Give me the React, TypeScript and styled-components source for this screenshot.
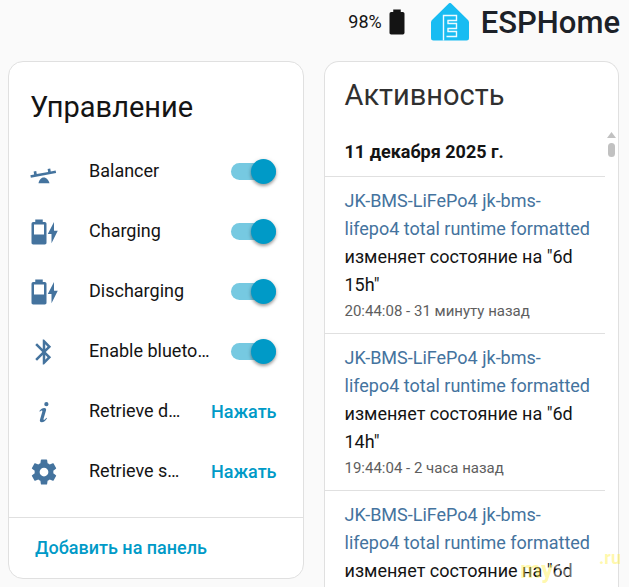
import React from 'react';
import styled, { createGlobalStyle } from 'styled-components';

const GlobalStyle = createGlobalStyle`
  * { box-sizing: border-box; }
  html, body, #root { height: 100%; }
  body {
    margin: 0;
    background: #fafafa;
    color: #141414;
    font-family: Roboto, "Noto Sans", sans-serif;
    font-size: 18px;
    line-height: 28px;
    overflow: hidden;
  }
`;

const Page = styled.div`
  display: flex;
  flex-direction: column;
  height: 100%;
  position: relative;
`;

const TopBar = styled.header`
  display: flex;
  flex: none;
  justify-content: flex-end;
  align-items: center;
  height: 44px;
  padding-right: 9px;
`;

const Charge = styled.span`
  display: flex;
  align-items: center;
  margin-right: 19px;
`;

const Brand = styled.a`
  display: flex;
  align-items: center;
  gap: 12px;
  color: #1c2128;
  text-decoration: none;
  font-size: 31px;
  font-weight: 500;
  line-height: 44px;
`;

const BrandName = styled.span`
  padding-top: 2px;
`;

const Columns = styled.main`
  display: grid;
  flex: 1;
  grid-template-columns: 1fr 1fr;
  align-items: start;
  gap: 20px;
  min-height: 0;
  padding: 17px 10px 0 8px;
`;

const Card = styled.section`
  min-width: 0;
  border: 1px solid #e0e0e0;
  border-radius: 15px;
  background: #fff;
`;

const ActivityCard = styled(Card)`
  display: flex;
  flex-direction: column;
  height: 100%;
  border-bottom: 0;
  border-radius: 15px 15px 0 0;
`;

const CardTitle = styled.h1`
  margin: 0;
  padding: 25px 21px 14px;
  font-size: 29px;
  font-weight: 400;
  line-height: 40px;
`;

const ActivityTitle = styled(CardTitle)`
  padding: 13px 20px 0;
  color: #303030;
`;

const Rows = styled.ul`
  margin: 0;
  padding: 0 26px 16px 20px;
  list-style: none;
`;

const Row = styled.li`
  display: flex;
  align-items: center;
  height: 60px;
`;

const RowIcon = styled.svg`
  flex: none;
  width: 30px;
  height: 30px;
  margin: 2px 30px 0 0;
  fill: #44739e;
`;

const RowName = styled.label`
  flex: 1;
  min-width: 0;
  overflow: hidden;
  text-overflow: ellipsis;
  white-space: nowrap;
`;

const Toggle = styled.input`
  appearance: none;
  display: flex;
  flex: none;
  align-items: center;
  justify-content: flex-end;
  width: 45px;
  height: 17px;
  margin: 0 1px 0 20px;
  border-radius: 9px;
  background: #76c9e1;
  cursor: pointer;

  &::before {
    content: "";
    width: 25px;
    height: 25px;
    border-radius: 50%;
    background: #009ac7;
    box-shadow: 0 2px 3px rgba(0, 0, 0, 0.3), 0 1px 5px rgba(0, 0, 0, 0.14);
  }
  &:not(:checked) { justify-content: flex-start; background: #bdbdbd; }
  &:not(:checked)::before { background: #fafafa; }
`;

const TextButton = styled.button`
  flex: none;
  margin: 0;
  padding: 0;
  border: 0;
  background: none;
  color: #009ac7;
  font: inherit;
  font-weight: 500;
  cursor: pointer;
`;

const PressButton = styled(TextButton)`
  margin: 2px 0 0 30px;
`;

const CardFooter = styled.footer`
  padding: 16px 26px;
  border-top: 1px solid #e0e0e0;
`;

const LogScroller = styled.div`
  display: flex;
  flex: 1;
  gap: 2px;
  min-height: 0;
  padding-right: 2px;
  overflow: hidden;
`;

const Log = styled.div`
  flex: 1;
  min-width: 0;
`;

const ScrollMark = styled.svg`
  flex: none;
  width: 9px;
  height: 28px;
  margin-top: 16px;
  fill: #c1c1c1;
`;

const LogDate = styled.h2`
  margin: 0;
  padding: 26px 20px 13px;
  border-bottom: 1px solid #e0e0e0;
  font-size: 18px;
  font-weight: 700;
  line-height: 22px;
`;

const Entry = styled.article`
  padding: 10px 12px 9px 20px;
  border-bottom: 1px solid #e0e0e0;
`;

const EntityLink = styled.a`
  color: #44739e;
  text-decoration: none;
`;

const Message = styled.p`
  margin: 0;
`;

const Time = styled.time`
  display: block;
  color: #5e5e5e;
  font-size: 15px;
  line-height: 25px;
`;

const Watermark = styled.div`
  position: absolute;
  right: 8px;
  bottom: 5px;
  display: flex;
  align-items: flex-end;
  color: rgba(255, 240, 70, 0.45);
  font-size: 24px;
  font-weight: 700;
  line-height: 24px;
  pointer-events: none;
`;

const WatermarkCenter = styled.span`
  color: rgba(255, 255, 255, 0.4);
`;

const WatermarkDomain = styled.span`
  padding-bottom: 12px;
  font-size: 18px;
`;

const ICONS = {
  seesaw:
    'M21.700 12.800 1.500 16.600l-.4-2 3-.55-.4-2.400 2.100-.4.400 2.400 9.100-1.700-.4-2.400 2.100-.4.400 2.400 3.900-.7.400 2ZM7.600 21c.5-2.500 2-4.600 4.200-4.600 2.200 0 3.900 2.100 4.600 4.600Z',
  battery:
    'M12 14H4V6h8m.67-2H11V2H5v2H3.330A1.340 1.340 0 0 0 2 5.330v15.330C2 21.400 2.600 22 3.330 22h9.340c.74 0 1.330-.6 1.330-1.330V5.330C14 4.600 13.400 4 12.670 4M23 11h-3V4l-5 9.500h3V21z',
  bluetooth:
    'M14.88 16.29 13 18.17v-3.76m0-8.58 1.88 1.88L13 9.58m4.71-1.87L12 2h-1v7.58L6.41 5 5 6.41 10.59 12 5 17.58 6.41 19 11 14.41V22h1l5.71-5.71L13.41 12z',
  info:
    'M13.900 4a1.700 1.700 0 1 1 0 3.400 1.700 1.700 0 0 1 0-3.400M8.300 11.200c1.200-1.600 2.500-2.500 3.900-2.500 1.300 0 1.800.8 1.400 2.100l-1.900 6.400c-.2.700-.1 1 .3 1 .5 0 1.200-.7 1.900-1.700l.5.400c-1.200 2-2.600 3.200-4.200 3.200-1.300 0-1.800-.8-1.400-2.100l1.700-5.900c.3-.9.200-1.300-.3-1.300-.4 0-.9.400-1.500 1Z',
  cog:
    'M12 15.5A3.5 3.5 0 0 1 8.5 12 3.5 3.5 0 0 1 12 8.5a3.5 3.5 0 0 1 3.5 3.5 3.5 3.5 0 0 1-3.5 3.5m7.43-2.53c.04-.32.07-.64.07-.97s-.03-.66-.07-1l2.11-1.63c.19-.15.24-.42.12-.64l-2-3.46c-.12-.22-.39-.31-.61-.22l-2.49 1c-.52-.39-1.06-.73-1.69-.98l-.37-2.65A.506.506 0 0 0 14 2h-4c-.25 0-.46.18-.5.42l-.37 2.65c-.63.25-1.17.59-1.69.98l-2.49-1c-.22-.09-.49 0-.61.22l-2 3.46c-.13.22-.07.49.12.64L4.57 11c-.04.34-.07.67-.07 1s.03.65.07.97l-2.11 1.66c-.19.15-.25.42-.12.64l2 3.46c.12.22.39.3.61.22l2.49-1.01c.52.4 1.06.74 1.69.99l.37 2.65c.04.24.25.42.5.42h4c.25 0 .46-.18.5-.42l.37-2.65c.63-.26 1.17-.59 1.69-.99l2.49 1.01c.22.08.49 0 .61-.22l2-3.46c.12-.22.07-.49-.12-.64z',
};

type Control = { id: string; name: string; icon: keyof typeof ICONS; action?: string };

const CONTROLS: Control[] = [
  { id: 'balancer', name: 'Balancer', icon: 'seesaw' },
  { id: 'charging', name: 'Charging', icon: 'battery' },
  { id: 'discharging', name: 'Discharging', icon: 'battery' },
  { id: 'bluetooth', name: 'Enable bluetooth', icon: 'bluetooth' },
  { id: 'device', name: 'Retrieve device info', icon: 'info', action: 'Нажать' },
  { id: 'settings', name: 'Retrieve settings', icon: 'cog', action: 'Нажать' },
];

const ENTRIES = [
  { value: '6d 15h', time: '20:44:08', ago: '31 минуту назад' },
  { value: '6d 14h', time: '19:44:04', ago: '2 часа назад' },
  { value: '6d 13h', time: '18:44:01', ago: '3 часа назад' },
];

function ControlRow({ control }: { control: Control }) {
  return (
    <Row>
      <RowIcon viewBox="0 0 24 24" aria-hidden="true">
        <path d={ICONS[control.icon]} fillRule="evenodd" />
      </RowIcon>
      <RowName htmlFor={control.id}>{control.name}</RowName>
      {control.action ? (
        <PressButton id={control.id}>{control.action}</PressButton>
      ) : (
        <Toggle id={control.id} type="checkbox" role="switch" defaultChecked />
      )}
    </Row>
  );
}

export default function App() {
  return (
    <>
      <GlobalStyle />
      <Page>
        <TopBar>
          <Charge>
            98%
            <svg width="30" height="30" viewBox="0 0 24 24" fill="#141414" aria-hidden="true">
              <path d="M16.67 4H15V2H9v2H7.33A1.33 1.33 0 0 0 6 5.33v15.34C6 21.4 6.6 22 7.33 22h9.34A1.33 1.33 0 0 0 18 20.67V5.33C18 4.6 17.4 4 16.67 4" />
            </svg>
          </Charge>
          <Brand href="#">
            <svg width="38" height="38" viewBox="0 0 38 38" aria-hidden="true">
              <path
                fill="#18bcf2"
                d="M17.5.8a2 2 0 0 1 3 0L36.5 16.5A4 4 0 0 1 38 19.5V35a2.500 2.500 0 0 1-2.500 2.500h-33A2.500 2.500 0 0 1 0 35V19.500a4 4 0 0 1 1.500-3Z"
              />
              <path
                fill="none"
                stroke="#eefaff"
                strokeWidth="1.4"
                d="M12.500 37.500V12.500H25.500V17.500H17V20.500H25.500V25.500H17V28.500H25.500V33.500H15.500"
              />
            </svg>
            <BrandName>ESPHome</BrandName>
          </Brand>
        </TopBar>
        <Columns>
          <Card>
            <CardTitle>Управление</CardTitle>
            <Rows>
              {CONTROLS.map((control) => (
                <ControlRow key={control.id} control={control} />
              ))}
            </Rows>
            <CardFooter>
              <TextButton>Добавить на панель</TextButton>
            </CardFooter>
          </Card>
          <ActivityCard>
            <ActivityTitle>Активность</ActivityTitle>
            <LogScroller>
              <Log>
                <LogDate>11 декабря 2025 г.</LogDate>
                {ENTRIES.map((entry) => (
                  <Entry key={entry.time}>
                    <Message>
                      <EntityLink href="#">JK-BMS-LiFePo4 jk-bms-lifepo4 total runtime formatted</EntityLink>{' '}
                      изменяет состояние на "{entry.value}"
                    </Message>
                    <Time>
                      {entry.time} - {entry.ago}
                    </Time>
                  </Entry>
                ))}
              </Log>
              <ScrollMark viewBox="0 0 9 28" aria-hidden="true">
                <path d="M4.5 1 9 7H0Z" />
                <rect x="1" y="12" width="7" height="14" rx="3.5" />
              </ScrollMark>
            </LogScroller>
          </ActivityCard>
        </Columns>
        <Watermark aria-hidden="true">
          <span>my</span>
          <WatermarkCenter>SKU</WatermarkCenter>
          <WatermarkDomain>.ru</WatermarkDomain>
        </Watermark>
      </Page>
    </>
  );
}
